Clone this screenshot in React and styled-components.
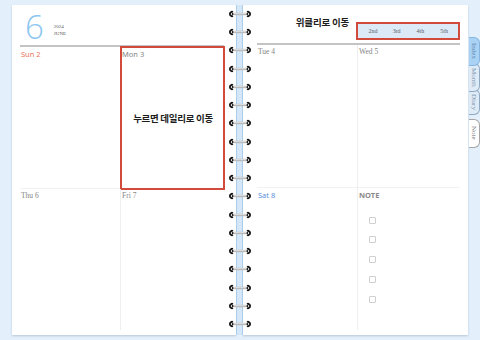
import styled, { createGlobalStyle } from "styled-components";

const GlobalStyle = createGlobalStyle`
  html, body {
    margin: 0;
    padding: 0;
    background: #e3effa;
  }
  body {
    font-family: "Noto Sans", "Noto Sans CJK KR", sans-serif;
  }
`;

const RING_COUNT = 18;

const weekTabs = ["2nd", "3rd", "4th", "5th"];
const sideTabs = [
  { label: "Index", kind: "active" },
  { label: "Month", kind: "soft" },
  { label: "Diary", kind: "soft" },
  { label: "Note", kind: "plain" },
];

function Ring() {
  return (
    <svg width="26" height="8" viewBox="0 0 26 8">
      <line x1="5" y1="4" x2="21" y2="4" stroke="#b9b9b9" strokeWidth="2.4" />
      <line x1="6" y1="3.5" x2="20" y2="3.5" stroke="#e8e8e8" strokeWidth="0.7" />
      <path d="M6 2 A2.2 2.2 0 1 0 6 6" fill="none" stroke="#151515" strokeWidth="1.8" />
      <circle cx="5.6" cy="4" r="0.9" fill="#151515" />
      <path d="M20 2 A2.2 2.2 0 1 1 20 6" fill="none" stroke="#151515" strokeWidth="1.8" />
      <circle cx="20.4" cy="4" r="0.9" fill="#151515" />
    </svg>
  );
}

function DayCell({ label, tone, serif, highlighted, children }) {
  return (
    <Cell $highlighted={highlighted}>
      <DayLabel $tone={tone} $serif={serif}>
        {label}
      </DayLabel>
      {children}
    </Cell>
  );
}

function App() {
  return (
    <>
      <GlobalStyle />
      <Binder>
        <Page>
          <LeftHeader>
            <MonthNumber>6</MonthNumber>
            <MonthMeta>
              <span>2024</span>
              <span>JUNE</span>
            </MonthMeta>
          </LeftHeader>
          <WeekGrid>
            <DayCell label="Sun 2" tone="sun" />
            <DayCell label="Mon 3" highlighted>
              <Hint>누르면 데일리로 이동</Hint>
            </DayCell>
            <DayCell label="Thu 6" serif />
            <DayCell label="Fri 7" serif />
          </WeekGrid>
        </Page>

        <Spine>
          <RingColumn>
            {Array.from({ length: RING_COUNT }, (_, i) => (
              <Ring key={i} />
            ))}
          </RingColumn>
        </Spine>

        <Page $right>
          <RightHeader>
            <HeaderTitle>위클리로 이동</HeaderTitle>
            <WeekSwitch>
              {weekTabs.map((w) => (
                <WeekItem key={w}>{w}</WeekItem>
              ))}
            </WeekSwitch>
          </RightHeader>
          <WeekGrid>
            <DayCell label="Tue 4" serif />
            <DayCell label="Wed 5" serif />
            <DayCell label="Sat 8" tone="sat" />
            <DayCell label="NOTE" tone="note">
              <CheckList>
                {[0, 1, 2, 3, 4].map((i) => (
                  <CheckBox key={i} />
                ))}
              </CheckList>
            </DayCell>
          </WeekGrid>
        </Page>

        <TabRail>
          {sideTabs.map((t, i) => (
            <SideTab key={t.label} $kind={t.kind} $layer={sideTabs.length - i}>
              {t.label}
            </SideTab>
          ))}
        </TabRail>
      </Binder>
    </>
  );
}

const Binder = styled.div`
  display: flex;
  align-items: flex-start;
  height: 340px;
  padding: 5px 0 0 12px;
  box-sizing: border-box;
`;

const Page = styled.section`
  width: ${(p) => (p.$right ? "225px" : "224px")};
  height: 330px;
  background: #ffffff;
  box-shadow: 0 1px 2px rgba(60, 80, 110, 0.25);
  box-sizing: border-box;
  padding: ${(p) => (p.$right ? "0 8px 5px 14px" : "0 12px 5px 8px")};
  display: flex;
  flex-direction: column;
`;

const LeftHeader = styled.header`
  height: 40px;
  border-bottom: 2px solid #c4c4c4;
  display: flex;
  align-items: center;
  padding-left: 5px;
  gap: 10px;
`;

const MonthNumber = styled.div`
  font-family: "Open Sans", "Liberation Sans", sans-serif;
  font-weight: 300;
  font-size: 33px;
  line-height: 33px;
  color: #8cc6f1;
  margin-top: 3px;
`;

const MonthMeta = styled.div`
  align-self: flex-end;
  margin-bottom: 8px;
  display: flex;
  flex-direction: column;
  gap: 1px;
  font-family: "Liberation Serif", serif;
  font-size: 5px;
  line-height: 6px;
  color: #555;
`;

const RightHeader = styled.header`
  height: 40px;
  border-bottom: 2px solid #c4c4c4;
  display: flex;
  justify-content: flex-end;
  align-items: flex-start;
  gap: 7px;
  padding-top: 10px;
  box-sizing: border-box;
`;

const HeaderTitle = styled.h2`
  margin: 0;
  font-family: "Noto Sans CJK KR", sans-serif;
  font-weight: 700;
  font-size: 9.5px;
  line-height: 14px;
  letter-spacing: -0.2px;
  color: #1d1d1d;
`;

const WeekSwitch = styled.div`
  margin-top: 7px;
  width: 104px;
  height: 18px;
  box-sizing: border-box;
  border: 2px solid #d24a3c;
  background: #dce9f7;
  display: grid;
  grid-template-columns: repeat(4, 1fr);
  align-items: center;
  padding: 0 2px 0 3px;
`;

const WeekItem = styled.span`
  text-align: center;
  font-family: "Liberation Serif", serif;
  font-size: 6px;
  color: #59606a;
`;

const WeekGrid = styled.div`
  flex: 1;
  display: grid;
  grid-template-columns: 101px 1fr;
  grid-template-rows: 1fr 1fr;
`;

const Cell = styled.div`
  position: relative;
  display: flex;
  flex-direction: column;
  padding: 2px 0 0 1px;
  box-sizing: border-box;
  border-bottom: 1px solid #f1f1f1;
  &:nth-child(odd) {
    border-right: 1px solid #eeeeee;
  }
  &:nth-child(n + 3) {
    border-bottom: none;
  }
  ${(p) =>
    p.$highlighted &&
    `
    outline: 2px solid #d24a3c;
    outline-offset: -1px;
  `}
`;

const toneColors = {
  sun: "#ea7560",
  sat: "#5b8fd9",
  note: "#8a8a8a",
};

const DayLabel = styled.span`
  font-family: ${(p) =>
    p.$serif ? '"Liberation Serif", serif' : '"Noto Sans", sans-serif'};
  font-size: 7.5px;
  line-height: 10px;
  font-weight: ${(p) => (p.$tone === "note" ? 700 : 400)};
  color: ${(p) => toneColors[p.$tone] || "#858585"};
`;

const Hint = styled.div`
  flex: 1;
  display: flex;
  align-items: center;
  justify-content: center;
  padding-bottom: 10px;
  font-family: "Noto Sans CJK KR", sans-serif;
  font-weight: 700;
  font-size: 9.5px;
  letter-spacing: -0.3px;
  color: #1d1d1d;
`;

const CheckList = styled.div`
  display: flex;
  flex-direction: column;
  gap: 12.8px;
  padding: 17px 0 0 10px;
`;

const CheckBox = styled.span`
  width: 7px;
  height: 7px;
  box-sizing: border-box;
  border: 1px solid #cfcfcf;
  border-radius: 1px;
`;

const Spine = styled.div`
  position: relative;
  width: 7px;
  height: 330px;
  background: #d4e7f8;
  border-left: 1px solid #abcdea;
  border-right: 1px solid #abcdea;
  box-sizing: border-box;
`;

const RingColumn = styled.div`
  position: absolute;
  top: 5px;
  left: -10px;
  display: flex;
  flex-direction: column;
  gap: 10.24px;
  svg {
    display: block;
  }
`;

const TabRail = styled.nav`
  display: flex;
  flex-direction: column;
  margin-top: 32px;
  margin-left: 1px;
`;

const tabStyles = {
  active: "background: #a9d2f4; border-color: #86b6e0; color: #6388ad;",
  soft: "background: #dfecf8; border-color: #8fa9c2; color: #7d93aa;",
  plain: "background: #ffffff; border-color: #a5a5a5; color: #777;",
};

const SideTab = styled.div`
  position: relative;
  z-index: ${(p) => p.$layer};
  width: 11px;
  box-sizing: border-box;
  border: 1px solid;
  border-left: none;
  border-radius: 0 6px 6px 0;
  margin-top: -3px;
  padding: 4px 0;
  writing-mode: vertical-rl;
  font-family: "Liberation Serif", serif;
  font-size: 7px;
  line-height: 10px;
  text-align: center;
  ${(p) => tabStyles[p.$kind]}
  &:first-child {
    margin-top: 0;
    padding: 5px 0 6px;
  }
  &:last-child {
    margin-top: 4px;
    padding: 6px 0 8px;
  }
`;

export default App;
